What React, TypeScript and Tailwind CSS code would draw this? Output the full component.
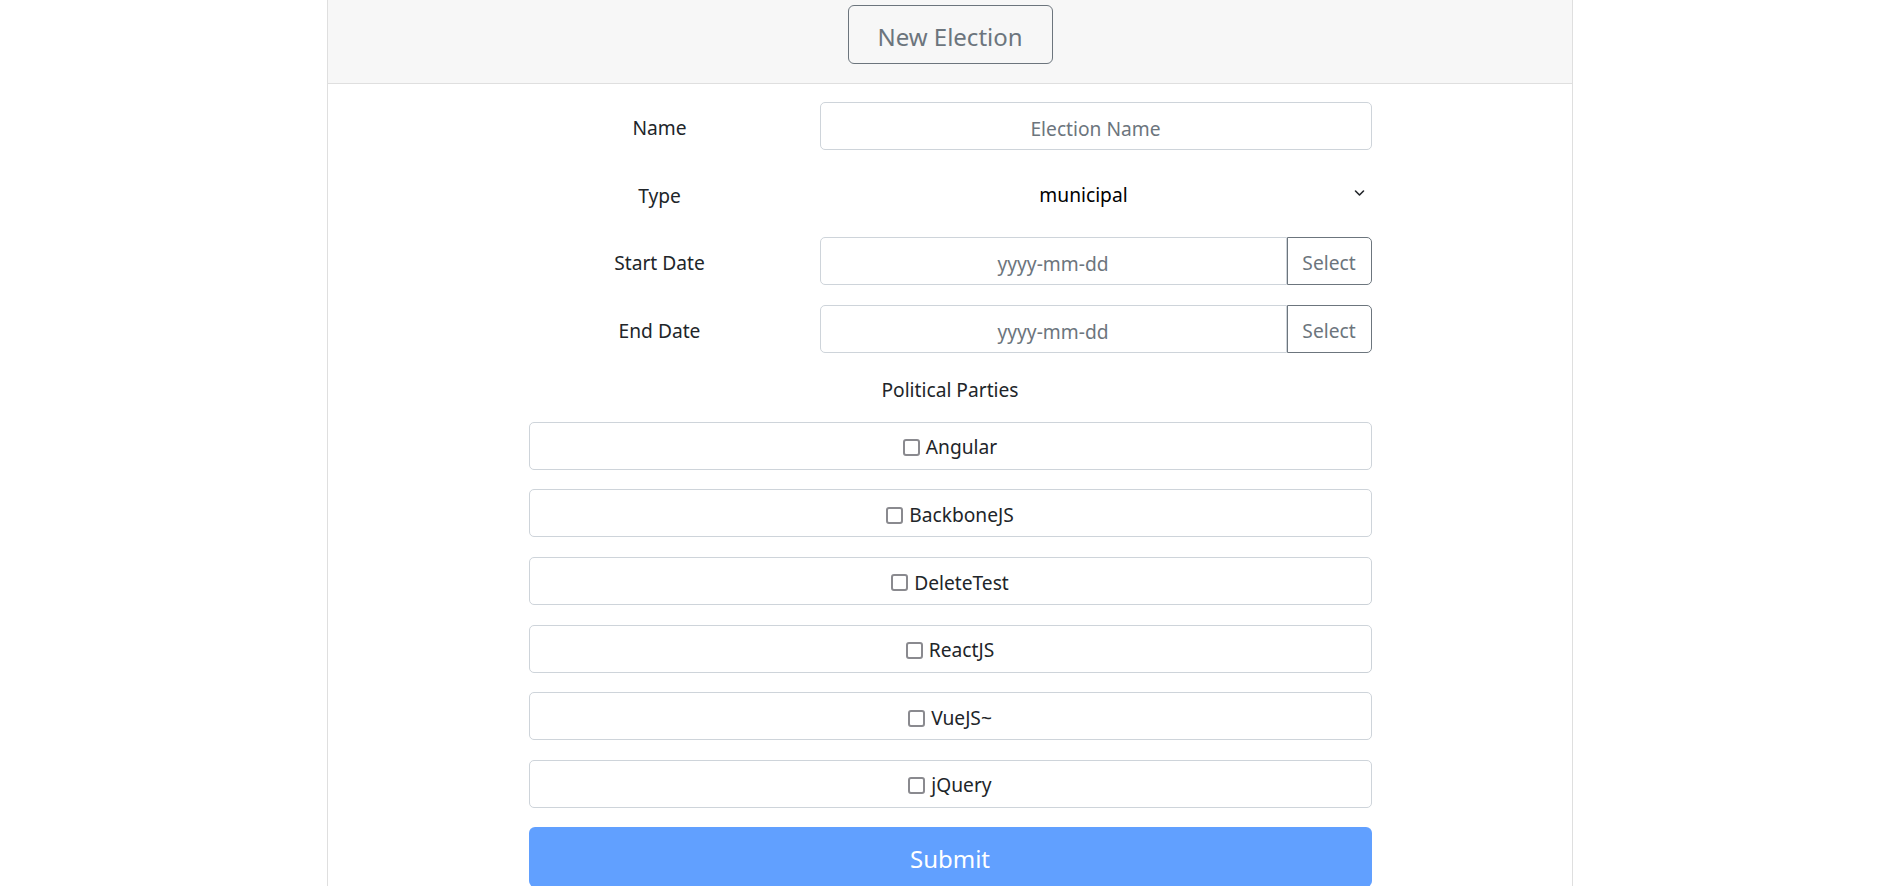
import React from "react";

const parties = ["Angular", "BackboneJS", "DeleteTest", "ReactJS", "VueJS~", "jQuery"];

function Row({ label, children }: { label: string; children: React.ReactNode }) {
  return (
    <div className="flex items-center h-[48px] gap-[29px]">
      <div className="w-[262px] text-center text-[#212529] pt-[5px]">{label}</div>
      <div className="flex-1 h-full flex">{children}</div>
    </div>
  );
}

function DateInput() {
  return (
    <div className="flex w-full h-full">
      <input
        placeholder="yyyy-mm-dd"
        className="flex-1 min-w-0 h-full pt-[5px] border border-[#ced4da] rounded-l-[5px] text-center text-[#495057] placeholder:text-[#6c757d] outline-none"
      />
      <button className="w-[85px] h-full pt-[5px] border border-[#6c757d] rounded-r-[5px] text-[#6c757d] bg-white">
        Select
      </button>
    </div>
  );
}

export default function App() {
  return (
    <div
      className="min-h-[886px] bg-white text-[19.2px] leading-[1.5] text-[#212529]"
      style={{ fontFamily: '"Noto Sans", "Open Sans", Arial, sans-serif' }}
    >
      <div className="w-[1246px] min-h-[886px] border-x border-[#dfdfdf] ml-[327px]">
        <div className="bg-[#f7f7f7] border-b border-[#dfdfdf] h-[84px] flex justify-center pt-[5px]">
          <button className="w-[205px] h-[59px] pt-[5px] border border-[#6c757d] rounded-[6px] text-[24px] text-[#6c757d]">
            New Election
          </button>
        </div>
        <div className="mx-auto w-[843px] pt-[18px] flex flex-col">
          <div className="flex flex-col gap-[19.6px]">
            <Row label="Name">
              <input
                placeholder="Election Name"
                className="w-full h-full pt-[5px] border border-[#ced4da] rounded-[5px] text-center text-[#495057] placeholder:text-[#6c757d] outline-none"
              />
            </Row>
            <Row label="Type">
              <div className="relative w-full h-full flex items-center justify-center pr-[24px] pt-[3px] text-black">
                <span>municipal</span>
                <svg
                  className="absolute right-[7px] top-[19px]"
                  width="11"
                  height="8"
                  viewBox="0 0 11 8"
                  fill="none"
                  stroke="#212529"
                  strokeWidth="1.6"
                  strokeLinecap="round"
                  strokeLinejoin="round"
                >
                  <path d="M1.5 2 L5.5 6 L9.5 2" />
                </svg>
              </div>
            </Row>
            <Row label="Start Date">
              <DateInput />
            </Row>
            <Row label="End Date">
              <DateInput />
            </Row>
          </div>
          <div className="mt-[19px] h-[36px] pt-[1px] flex items-center justify-center text-[#212529]">
            Political Parties
          </div>
          <div className="mt-[14px] flex flex-col gap-[19.6px]">
            {parties.map((p) => (
              <div
                key={p}
                className="h-[48px] pt-[4px] border border-[#ced4da] rounded-[5px] flex items-center justify-center"
              >
                <span className="shrink-0 w-[17px] h-[17px] border-2 border-[#8a8a8f] rounded-[3px] mr-[6px] bg-white"></span>
                <span>{p}</span>
              </div>
            ))}
          </div>
          <button className="mt-[19px] h-[60px] pt-[5px] rounded-[6px] bg-[#61a0ff] text-white text-[24px]">
            Submit
          </button>
        </div>
      </div>
    </div>
  );
}
